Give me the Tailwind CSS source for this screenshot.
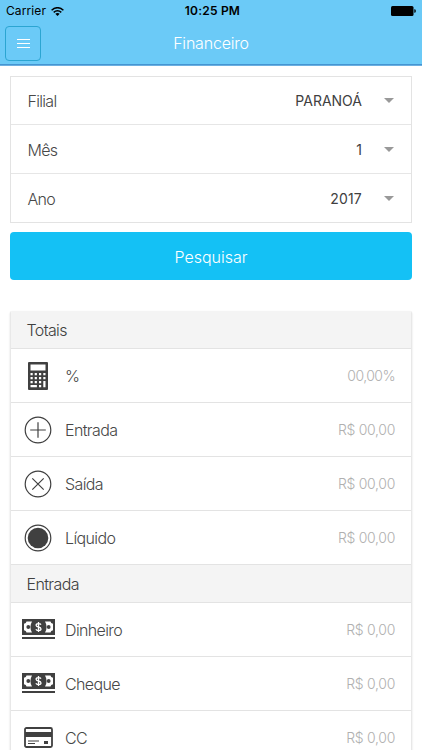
<!DOCTYPE html>
<html lang="pt-BR">
<head>
<meta charset="utf-8">
<title>Financeiro</title>
<script src="https://cdn.jsdelivr.net/npm/@tailwindcss/browser@4"></script>
</head>
<body class="h-[750px] overflow-hidden bg-white font-['Inter',sans-serif] font-light text-[#484848]">
<svg class="hidden">
  <symbol id="cash" viewBox="0 0 33 21">
    <path fill="#404040" d="M0 0h33v16H0z"/>
    <path fill="#fff" d="M4.500 2.500H10Q6.800 8 10 13.500H4.500Q4.300 11.500 2 11.200V4.800Q4.300 4.500 4.500 2.500zM28.500 2.500H23Q26.200 8 23 13.500H28.500Q28.700 11.500 31 11.200V4.800Q28.700 4.500 28.500 2.500z"/>
    <circle cx="6.300" cy="8" r="1.900" fill="#404040"/><circle cx="26.700" cy="8" r="1.900" fill="#404040"/>
    <path d="M19 5.600Q18.400 4.600 16.500 4.600Q14.100 4.600 14.100 6.200Q14.100 7.500 16.500 8Q19 8.500 19 9.900Q19 11.500 16.500 11.500Q14.500 11.500 13.900 10.300M16.500 3v10" fill="none" stroke="#fff" stroke-width="1.300"/>
    <path fill="#404040" d="M0 18h33v2H0z"/>
  </symbol>
</svg>
<header class="flex h-[66px] flex-col border-b border-[#6cafe0] bg-[#6bcaf7]">
  <div class="grid h-[22px] grid-cols-3 items-center pl-[6px] pr-[6px] text-black">
    <div class="flex items-center gap-[5px]">
      <span class="text-[12px] font-normal tracking-[0.1px]">Carrier</span>
      <svg class="h-[9px] w-[13px]" viewBox="0 0 13 9" fill="none" stroke="#000" stroke-width="1.500"><path d="M.6 3.200Q6.500-1.800 12.400 3.200M2.700 5.400Q6.500 2.200 10.300 5.400"/><path fill="#000" stroke="none" d="M4.300 6.800Q6.500 5.200 8.700 6.800L6.500 9z"/></svg>
    </div>
    <span class="pl-[3px] text-center text-[12px] font-semibold tracking-[0.2px]">10:25 PM</span>
    <svg class="h-[10px] w-[25px] justify-self-end" viewBox="0 0 25 10"><rect width="22.500" height="10" rx="1.500"/><path d="M23.300 3.300h.5q1 0 1 1.700t-1 1.700h-.5z"/></svg>
  </div>
  <div class="grid h-[42px] grid-cols-[36px_1fr_36px] items-center px-[5px] shadow-[0_1px_0_#4595d2]">
    <button class="flex h-[35px] w-[36px] items-center justify-center rounded-[4px] border border-[#2ba5d2]">
      <svg class="h-[11px] w-[13px]" viewBox="0 0 13 11" stroke="#fff" stroke-width="1.200"><path d="M0 1.500h13M0 5.500h13M0 9.500h13"/></svg>
    </button>
    <h1 class="text-center text-[16px] font-light tracking-[-0.2px] text-white">Financeiro</h1>
  </div>
</header>
<main class="pl-[10px] pr-[10px] pt-[10px]">
  <section class="h-[147px] divide-y divide-[#e6e6e6] border border-[#e3e3e3] text-[16px]">
    <div class="flex h-[48px] items-center justify-between pl-[16.5px] pr-[17px]"><span class="pt-px tracking-[-0.7px]">Filial</span><span class="flex items-center gap-[22px] text-[14px] font-normal text-[#404040]"><span>PARANOÁ</span><i class="border-x-[5px] border-t-[5px] border-x-transparent border-t-[#999]"></i></span></div>
    <div class="flex h-[49px] items-center justify-between pl-[16.5px] pr-[17px]"><span class="pt-[2px] tracking-[-0.7px]">Mês</span><span class="flex items-center gap-[22px] text-[14px] font-normal text-[#404040]"><span>1</span><i class="border-x-[5px] border-t-[5px] border-x-transparent border-t-[#999]"></i></span></div>
    <div class="flex h-[48px] items-center justify-between pl-[16.5px] pr-[17px]"><span class="pt-[2px] tracking-[-0.7px]">Ano</span><span class="flex items-center gap-[22px] text-[14px] font-normal text-[#404040]"><span class="tracking-[0.2px]">2017</span><i class="border-x-[5px] border-t-[5px] border-x-transparent border-t-[#999]"></i></span></div>
  </section>
  <button class="mt-[9px] flex h-[48px] w-full items-center justify-center rounded-[4px] bg-[#14c1f5] pt-[2px] text-[16px] font-light text-white">Pesquisar</button>
  <section class="mt-[31px] overflow-hidden rounded-[2px] border-x border-[#e8e8e8] text-[16px] tracking-[-0.62px] shadow-[0_1px_2px_rgba(0,0,0,0.16)]">
    <h2 class="flex h-[38px] items-center border-b border-[#e3e3e3] bg-[#f4f4f4] pl-[15.5px] pt-px text-[#404040]">Totais</h2>
    <div class="flex h-[54px] items-center border-b border-[#e3e3e3] pl-[10px] pr-[16px]">
      <svg class="mr-[11px] h-[30px] w-[33px]" viewBox="0 0 33 30"><rect x="7" y="1" width="20" height="28" rx="1" fill="#404040"/><path fill="#fff" d="M9.500 3.500h15v6h-15zM9.500 12h2.200v2.200H9.500zM13.700 12h2.200v2.200h-2.200zM18 12h2.200v2.200H18zM22.300 12h2.200v2.200h-2.200zM9.500 16h2.200v2.200H9.500zM13.700 16h2.200v2.200h-2.200zM18 16h2.200v2.200H18zM22.300 16h2.200v2.200h-2.200zM9.500 20h2.200v2.200H9.500zM13.700 20h2.200v2.200h-2.200zM18 20h2.200v2.200H18zM22.300 20h2.200v6.200h-2.200zM9.500 24h6.400v2.200H9.500zM18 24h2.200v2.200H18z"/></svg>
      <span class="flex-1">%</span><span class="text-[14px] tracking-[-0.55px] text-[#b0b0b0]">00,00%</span>
    </div>
    <div class="flex h-[54px] items-center border-b border-[#e3e3e3] pl-[10px] pr-[16px]">
      <svg class="mr-[11px] h-[30px] w-[33px]" viewBox="0 0 33 30" fill="none" stroke="#404040" stroke-width="1.200"><circle cx="17" cy="15" r="12.800"/><path d="M9.200 15h15.600M17 7.200v15.600"/></svg>
      <span class="flex-1">Entrada</span><span class="text-[14px] tracking-[-0.3px] text-[#b0b0b0]">R$ 00,00</span>
    </div>
    <div class="flex h-[54px] items-center border-b border-[#e3e3e3] pl-[10px] pr-[16px]">
      <svg class="mr-[11px] h-[30px] w-[33px]" viewBox="0 0 33 30" fill="none" stroke="#404040" stroke-width="1.200"><circle cx="17" cy="15" r="12.800"/><path d="M11.300 9.300l11.400 11.400M22.700 9.300L11.300 20.700"/></svg>
      <span class="flex-1">Saída</span><span class="text-[14px] tracking-[-0.3px] text-[#b0b0b0]">R$ 00,00</span>
    </div>
    <div class="flex h-[54px] items-center border-b border-[#e3e3e3] pl-[10px] pr-[16px]">
      <svg class="mr-[11px] h-[30px] w-[33px]" viewBox="0 0 33 30"><circle cx="17" cy="15" r="12.800" fill="none" stroke="#404040" stroke-width="1.200"/><circle cx="17" cy="15" r="10.300" fill="#404040"/></svg>
      <span class="flex-1">Líquido</span><span class="text-[14px] tracking-[-0.3px] text-[#b0b0b0]">R$ 00,00</span>
    </div>
    <h2 class="flex h-[38px] items-center border-b border-[#e3e3e3] bg-[#f4f4f4] pl-[15.5px] pt-px text-[#404040]">Entrada</h2>
    <div class="flex h-[54px] items-center border-b border-[#e3e3e3] pl-[10.5px] pr-[16px]">
      <svg class="mr-[10.5px] h-[21px] w-[33px]"><use href="#cash"/></svg>
      <span class="flex-1">Dinheiro</span><span class="text-[14px] tracking-[-0.3px] text-[#b0b0b0]">R$ 0,00</span>
    </div>
    <div class="flex h-[54px] items-center border-b border-[#e3e3e3] pl-[10.5px] pr-[16px]">
      <svg class="mr-[10.5px] h-[21px] w-[33px]"><use href="#cash"/></svg>
      <span class="flex-1">Cheque</span><span class="text-[14px] tracking-[-0.3px] text-[#b0b0b0]">R$ 0,00</span>
    </div>
    <div class="flex h-[54px] items-center border-b border-[#e3e3e3] pl-[10.5px] pr-[16px]">
      <svg class="mr-[10.5px] h-[21px] w-[33px]" viewBox="0 0 33 21"><rect x="3" y="1" width="27" height="19" rx="1.500" fill="none" stroke="#404040" stroke-width="1.800"/><path fill="#404040" d="M3 5h27v5H3zM22 14h4v3h-4zM6 13.500h11v1H6zM6 16h7v1H6z"/></svg>
      <span class="flex-1">CC</span><span class="text-[14px] tracking-[-0.3px] text-[#b0b0b0]">R$ 0,00</span>
    </div>
  </section>
</main>
</body>
</html>
